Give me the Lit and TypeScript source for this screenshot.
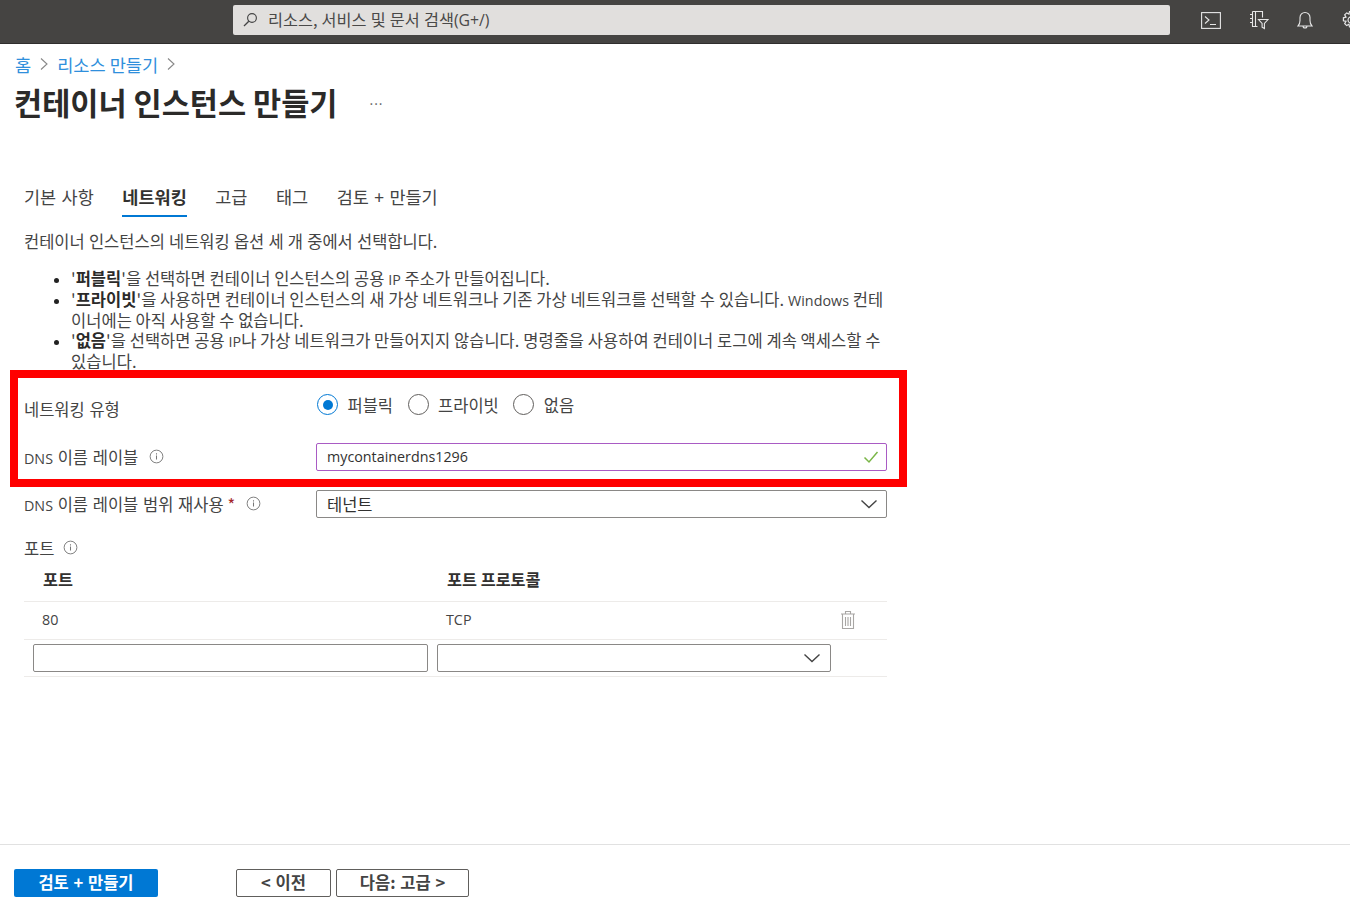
import { LitElement, html, css } from "lit";
import { customElement } from "lit/decorators.js";

const info = html`<svg class="info" viewBox="0 0 16 16" width="15" height="15" fill="none"><circle cx="8" cy="8" r="6.800" stroke="#777" stroke-width="1"/><path d="M8 7v4.200M8 4.600v1.200" stroke="#777" stroke-width="1.100"/></svg>`;
const chevron = html`<svg class="chev" viewBox="0 0 18 10" width="18" height="10" fill="none"><path d="M1.500 1.500 9 8.500l7.500-7" stroke="#444" stroke-width="1.400"/></svg>`;
const crumbSep = html`<svg viewBox="0 0 8 14" width="8" height="14" fill="none"><path d="M1 1.500 7 7l-6 5.500" stroke="#888" stroke-width="1.100"/></svg>`;

@customElement("app-root")
export class AppRoot extends LitElement {
  static styles = css`
    :host {
      display: block;
      position: relative;
      width: 1350px;
      height: 922px;
      overflow: hidden;
      background: #fff;
      color: #323130;
      font-family: "Noto Sans CJK KR", "Open Sans", sans-serif;
      font-size: 16.5px;
    }
    .lat { font-family: "Open Sans", sans-serif; font-size: 14.3px; line-height: 1; }
    .top {
      height: 44px;
      box-sizing: border-box;
      background: #454442;
      border-bottom: 1px solid #2f2e2d;
      display: flex;
      align-items: flex-start;
      padding: 5px 0 0 233px;
    }
    .search {
      width: 937px;
      height: 30px;
      box-sizing: border-box;
      background: #e1dfdd;
      border-radius: 2px;
      display: flex;
      align-items: center;
      padding-left: 9px;
      gap: 10px;
      font-size: 16.3px;
      color: #4a4948;
      flex: none;
    }
    .search .q { line-height: 28px; height: 28px; margin-top: -2px; white-space: nowrap; word-spacing: 0.500px; }
    .search .lat { font-size: 15.8px; }
    .topicons { display: flex; align-items: center; margin-left: 31px; gap: 28px; height: 30px; flex: none; }
    .crumbs {
      display: flex;
      align-items: center;
      height: 20px;
      margin: 10px 0 0 15px;
      gap: 9px;
      color: #2f8fdc;
      font-size: 17.6px;
    }
    .titlebar { display: flex; align-items: center; height: 44px; margin: 6px 0 0 14px; }
    h1 { margin: 0; font-size: 30.6px; font-weight: 700; color: #2b2a29; line-height: 44px; white-space: nowrap; }
    .more { margin-left: 32px; color: #666; font-family: "Open Sans", sans-serif; font-size: 14px; letter-spacing: 1px; position: relative; top: 1px; }
    .tabs { display: flex; margin: 60px 0 0 24px; gap: 28.5px; height: 33px; font-size: 17.5px; word-spacing: 1.500px; }
    .tab { height: 33px; box-sizing: border-box; line-height: 25px; color: #444; white-space: nowrap; }
    .tab.on { font-weight: 700; color: #323130; border-bottom: 2px solid #0078d4; }
    .lead { margin: 12px 0 0 24px; line-height: 24px; height: 24px; color: #444; white-space: nowrap; word-spacing: 0.500px; }
    ul { margin: 15px 0 0; padding: 0 0 0 71px; width: 815px; line-height: 20.8px; color: #444; letter-spacing: 0.040px; }
    li b { color: #2b2a29; }
    li::marker { color: #222; font-size: 14px; }
    .row { display: flex; margin-left: 24px; align-items: center; }
    .label { width: 292px; flex: none; display: flex; align-items: center; gap: 11px; color: #444; white-space: nowrap; word-spacing: 1px; }
    .req { color: #a4262c; margin-left: -7px; }
    .radios { display: flex; align-items: center; gap: 14.5px; margin-left: 1px; }
    .radio { display: flex; align-items: center; gap: 9.500px; color: #444; line-height: 22px; white-space: nowrap; }
    .dot { width: 21px; height: 21px; border-radius: 50%; border: 1.500px solid #605e5c; box-sizing: border-box; display: flex; align-items: center; justify-content: center; flex: none; }
    .dot.on { border-color: #0078d4; }
    .dot.on::after { content: ""; width: 10px; height: 10px; border-radius: 50%; background: #0078d4; }
    .field {
      width: 571px;
      height: 28px;
      box-sizing: border-box;
      border: 1px solid #8a8886;
      border-radius: 2px;
      display: flex;
      align-items: center;
      justify-content: space-between;
      padding: 0 8px 0 10px;
      color: #323130;
      background: #fff;
    }
    .field.valid { border-color: #a95bc4; padding-right: 7px; }
    .r1 { height: 71px; align-items: flex-start; }
    .r1 .label { padding-top: 26px; line-height: 22px; }
    .r1 .radios { padding-top: 22px; }
    .r2 { height: 28px; }
    .r3 { margin-top: 19px; height: 28px; }
    .ports { margin: 19px 0 0 24px; display: flex; align-items: center; gap: 9px; height: 22px; color: #444; }
    .table { margin: 0 0 0 24px; width: 863px; }
    .tr { display: grid; grid-template-columns: 413px 1fr; border-bottom: 1px solid #edebe9; align-items: center; box-sizing: border-box; }
    .thead { height: 43px; font-weight: 700; font-size: 16.3px; padding-bottom: 2px; color: #323130; }
    .tbody { height: 38px; color: #444; }
    .cell { padding-left: 19px; }
    .cell.h2 { padding-left: 10px; }
    .cell.num { display: flex; align-items: center; padding-left: 18px; }
    .cell.tcp { padding-left: 9px; display: flex; justify-content: space-between; align-items: center; padding-right: 31px; }
    .tinput { height: 37px; }
    .tinput .box { margin-left: 9px; width: 395px; height: 28px; box-sizing: border-box; border: 1px solid #8a8886; border-radius: 2px; }
    .tinput .sel { width: 394px; height: 28px; box-sizing: border-box; border: 1px solid #8a8886; border-radius: 2px; display: flex; align-items: center; justify-content: flex-end; padding-right: 9px; }
    .footer { position: absolute; left: 0; right: 0; top: 844px; height: 78px; border-top: 1px solid #e1e1e1; box-sizing: border-box; display: flex; align-items: flex-start; padding: 24px 0 0 14px; }
    .btn { height: 28px; box-sizing: border-box; border-radius: 2px; display: flex; align-items: center; justify-content: center; font-weight: 700; font-size: 16.5px; flex: none; padding-bottom: 3px; white-space: nowrap; word-spacing: 1px; }
    .primary { width: 144px; background: #0078d4; color: #fff; margin-right: 78px; }
    .ghost { border: 1px solid #605e5c; color: #444; background: #fff; }
    .prev { width: 95px; margin-right: 5px; }
    .next { width: 133px; }
    .redbox { position: absolute; left: 10px; top: 370px; width: 897px; height: 117px; box-sizing: border-box; border: 8px solid #ff0000; pointer-events: none; }
  `;

  render() {
    return html`
      <div class="top">
        <div class="search">
          <svg viewBox="0 0 16 16" width="16" height="16" fill="none"><circle cx="10" cy="6" r="4.400" stroke="#444" stroke-width="1.100"/><path d="M6.800 9.200 2 14" stroke="#444" stroke-width="1.300"/></svg>
          <span class="q">리소스, 서비스 및 문서 검색<span class="lat">(G+/)</span></span>
        </div>
        <div class="topicons">
          <svg viewBox="0 0 20 17" width="20" height="17" fill="none" stroke="#e6e6e6" stroke-width="1.100"><rect x="0.600" y="0.600" width="18.800" height="15.800"/><path d="M4 4.500l4 3.500-4 3.500M9 12.500h6"/></svg>
          <svg viewBox="0 0 20 20" width="20" height="20" fill="none" stroke="#e6e6e6" stroke-width="1.100"><path d="M3.500 1.500h10v6M3.500 1.500v15h5M6.500 1.500v15M1 4.500h2.500M1 8.500h2.500M1 12.500h2.500"/><path d="M9.500 9.500h9.500l-3.600 4v5l-2.300-1.300v-3.700z"/></svg>
          <svg viewBox="0 0 16 19" width="16" height="19" fill="none" stroke="#e6e6e6" stroke-width="1.100"><path d="M1 15h14c-1.500-1.400-2-3-2-5.500V6.500a5 5 0 0 0-10 0v3C3 12 2.500 13.600 1 15zM6 15a2 2 0 0 0 4 0"/></svg>
          <svg viewBox="0 0 20 20" width="20" height="20" fill="none" stroke="#e6e6e6" stroke-width="1.200"><circle cx="10" cy="10" r="3"/><path d="M8.500 1.500h3l.5 2.600 2.300-1.200 2 2-1.300 2.300 2.600.6v3l-2.600.5 1.300 2.300-2 2-2.300-1.300-.5 2.700h-3l-.5-2.700-2.300 1.300-2-2 1.300-2.300-2.600-.5v-3l2.600-.6-1.300-2.300 2-2 2.300 1.200z"/></svg>
        </div>
      </div>
      <div class="crumbs"><span>홈</span>${crumbSep}<span>리소스 만들기</span>${crumbSep}</div>
      <div class="titlebar"><h1>컨테이너 인스턴스 만들기</h1><span class="more">···</span></div>
      <div class="tabs">
        <div class="tab">기본 사항</div>
        <div class="tab on">네트워킹</div>
        <div class="tab">고급</div>
        <div class="tab">태그</div>
        <div class="tab">검토 + 만들기</div>
      </div>
      <div class="lead">컨테이너 인스턴스의 네트워킹 옵션 세 개 중에서 선택합니다.</div>
      <ul>
        <li>'<b>퍼블릭</b>'을 선택하면 컨테이너 인스턴스의 공용 <span class="lat">IP</span> 주소가 만들어집니다.</li>
        <li>'<b>프라이빗</b>'을 사용하면 컨테이너 인스턴스의 새 가상 네트워크나 기존 가상 네트워크를 선택할 수 있습니다. <span class="lat">Windows</span> 컨테이너에는 아직 사용할 수 없습니다.</li>
        <li>'<b>없음</b>'을 선택하면 공용 <span class="lat">IP</span>나 가상 네트워크가 만들어지지 않습니다. 명령줄을 사용하여 컨테이너 로그에 계속 액세스할 수 있습니다.</li>
      </ul>
      <div class="row r1">
        <div class="label">네트워킹 유형</div>
        <div class="radios">
          <div class="radio"><span class="dot on"></span>퍼블릭</div>
          <div class="radio"><span class="dot"></span>프라이빗</div>
          <div class="radio"><span class="dot"></span>없음</div>
        </div>
      </div>
      <div class="row r2">
        <div class="label"><span><span class="lat">DNS</span> 이름 레이블</span> ${info}</div>
        <div class="field valid"><span class="lat">mycontainerdns1296</span>
          <svg viewBox="0 0 16 14" width="16" height="14" fill="none"><path d="M1.500 7.500 6 12 14.500 2" stroke="#7ab648" stroke-width="1.500"/></svg>
        </div>
      </div>
      <div class="row r3">
        <div class="label"><span><span class="lat">DNS</span> 이름 레이블 범위 재사용</span> <span class="req">*</span> ${info}</div>
        <div class="field">테넌트 ${chevron}</div>
      </div>
      <div class="ports">포트 ${info}</div>
      <div class="table">
        <div class="tr thead"><div class="cell">포트</div><div class="cell h2">포트 프로토콜</div></div>
        <div class="tr tbody"><div class="cell num"><span class="lat">80</span></div>
          <div class="cell tcp"><span class="lat">TCP</span>
            <svg viewBox="0 0 16 20" width="16" height="20" fill="none" stroke="#a8a6a4" stroke-width="1.100"><path d="M1 4h14M5.500 4V1.500h5V4M2.500 4v14.500h11V4M5.500 7v9M8 7v9M10.500 7v9"/></svg>
          </div>
        </div>
        <div class="tr tinput">
          <div><div class="box"></div></div>
          <div><div class="sel">${chevron}</div></div>
        </div>
      </div>
      <div class="footer">
        <div class="btn primary">검토 + 만들기</div>
        <div class="btn ghost prev">&lt; 이전</div>
        <div class="btn ghost next">다음: 고급 &gt;</div>
      </div>
      <div class="redbox"></div>
    `;
  }
}
